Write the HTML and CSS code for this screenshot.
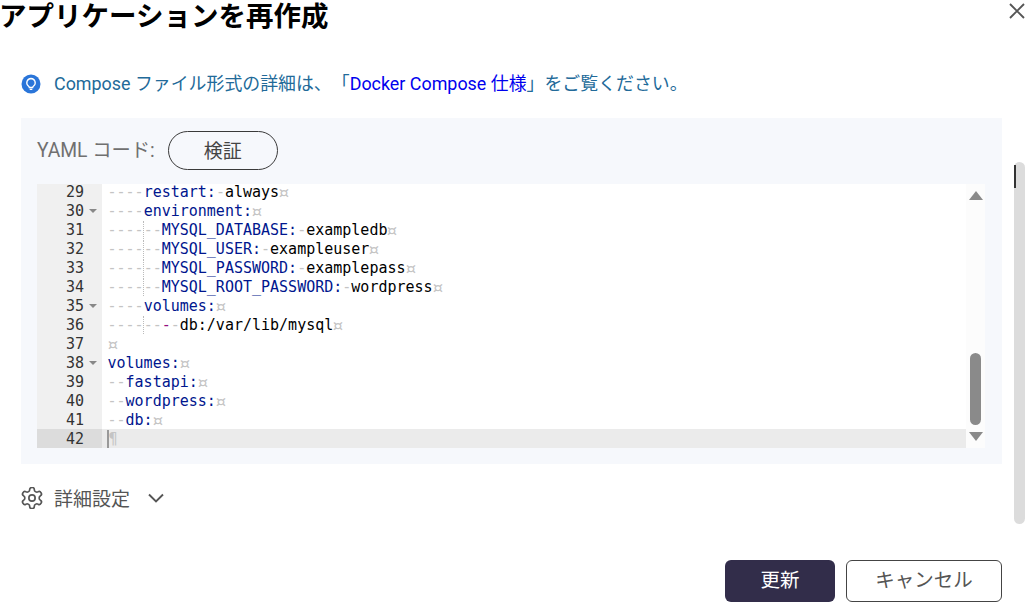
FILE: index.html
```
<!DOCTYPE html>
<html lang="ja">
<head>
<meta charset="utf-8">
<title>アプリケーションを再作成</title>
<link rel="stylesheet" href="styles.css">
</head>
<body>
<div class="dialog">
  <header class="head">
    <h1 class="title">アプリケーションを再作成</h1>
    <svg class="close" width="16" height="16" viewBox="0 0 16 16"><path d="M1 1L15 15M15 1L1 15" stroke="#555" stroke-width="1.9" fill="none"/></svg>
  </header>
  <div class="body">
    <main class="content">
      <p class="info">
        <svg class="bulb" width="20" height="20" viewBox="0 0 20 20"><circle cx="10" cy="10" r="9.5" fill="#2a75d9"/><path d="M10 4.500a4.300 4.300 0 0 0-2.400 7.800c.5.4.7.7.7 1.200h3.400c0-.5.2-.8.700-1.200A4.300 4.300 0 0 0 10 4.500zM8.700 15.300h2.600" fill="none" stroke="#fff" stroke-width="1.300"/></svg>
        <span class="info-text">Compose ファイル形式の詳細は、「<a class="link" href="#">Docker Compose 仕様</a>」をご覧ください。</span>
      </p>
      <section class="panel">
        <div class="yaml-row">
          <span class="yaml-label">YAML コード:</span>
          <button class="verify" type="button">検証</button>
        </div>
        <div class="editor">
          <div class="lines">
            <div class="line"><div class="gut"><span>29</span><i class="fold"></i></div><div class="code"><b>----</b><u>restart:</u><b>-</b>always<s>¤</s></div></div>
            <div class="line"><div class="gut"><span>30</span><i class="fold on"></i></div><div class="code"><b>----</b><u>environment:</u><s>¤</s></div></div>
            <div class="line"><div class="gut"><span>31</span><i class="fold"></i></div><div class="code"><b>----</b><b class="guide">--</b><u>MYSQL_DATABASE:</u><b>-</b>exampledb<s>¤</s></div></div>
            <div class="line"><div class="gut"><span>32</span><i class="fold"></i></div><div class="code"><b>----</b><b class="guide">--</b><u>MYSQL_USER:</u><b>-</b>exampleuser<s>¤</s></div></div>
            <div class="line"><div class="gut"><span>33</span><i class="fold"></i></div><div class="code"><b>----</b><b class="guide">--</b><u>MYSQL_PASSWORD:</u><b>-</b>examplepass<s>¤</s></div></div>
            <div class="line"><div class="gut"><span>34</span><i class="fold"></i></div><div class="code"><b>----</b><b class="guide">--</b><u>MYSQL_ROOT_PASSWORD:</u><b>-</b>wordpress<s>¤</s></div></div>
            <div class="line"><div class="gut"><span>35</span><i class="fold on"></i></div><div class="code"><b>----</b><u>volumes:</u><s>¤</s></div></div>
            <div class="line"><div class="gut"><span>36</span><i class="fold"></i></div><div class="code"><b>----</b><b class="guide">--</b><em>-</em><b>-</b>db:/var/lib/mysql<s>¤</s></div></div>
            <div class="line"><div class="gut"><span>37</span><i class="fold"></i></div><div class="code"><s>¤</s></div></div>
            <div class="line"><div class="gut"><span>38</span><i class="fold on"></i></div><div class="code"><u>volumes:</u><s>¤</s></div></div>
            <div class="line"><div class="gut"><span>39</span><i class="fold"></i></div><div class="code"><b>--</b><u>fastapi:</u><s>¤</s></div></div>
            <div class="line"><div class="gut"><span>40</span><i class="fold"></i></div><div class="code"><b>--</b><u>wordpress:</u><s>¤</s></div></div>
            <div class="line"><div class="gut"><span>41</span><i class="fold"></i></div><div class="code"><b>--</b><u>db:</u><s>¤</s></div></div>
            <div class="line active"><div class="gut"><span>42</span><i class="fold"></i></div><div class="code"><b class="cursor">¶</b></div></div>
          </div>
          <div class="vbar">
            <svg class="arrow" width="14" height="9" viewBox="0 0 14 9"><path d="M7 0L14 9H0z" fill="#8a8a8a"/></svg>
            <div class="thumb"></div>
            <svg class="arrow" width="14" height="9" viewBox="0 0 14 9"><path d="M0 0H14L7 9z" fill="#8a8a8a"/></svg>
          </div>
        </div>
      </section>
      <div class="advanced">
        <svg width="22" height="22" viewBox="1.500 1.500 21 21" fill="none" stroke="#555" stroke-width="1.600" stroke-linejoin="round"><circle cx="12" cy="12" r="3"/><path d="M12.220 2h-.44a2 2 0 0 0-2 2v.18a2 2 0 0 1-1 1.730l-.43.25a2 2 0 0 1-2 0l-.15-.08a2 2 0 0 0-2.730.73l-.22.38a2 2 0 0 0 .73 2.730l.15.1a2 2 0 0 1 1 1.720v.51a2 2 0 0 1-1 1.740l-.15.09a2 2 0 0 0-.73 2.730l.22.38a2 2 0 0 0 2.730.73l.15-.08a2 2 0 0 1 2 0l.43.25a2 2 0 0 1 1 1.730V20a2 2 0 0 0 2 2h.44a2 2 0 0 0 2-2v-.18a2 2 0 0 1 1-1.730l.43-.25a2 2 0 0 1 2 0l.15.08a2 2 0 0 0 2.730-.73l.22-.39a2 2 0 0 0-.73-2.730l-.15-.08a2 2 0 0 1-1-1.740v-.5a2 2 0 0 1 1-1.740l.15-.09a2 2 0 0 0 .73-2.730l-.22-.38a2 2 0 0 0-2.730-.73l-.15.08a2 2 0 0 1-2 0l-.43-.25a2 2 0 0 1-1-1.730V4a2 2 0 0 0-2-2z"/></svg>
        <span class="adv-label">詳細設定</span>
        <svg class="chev" width="18" height="10" viewBox="0 0 18 10"><path d="M2 1.500L9 8.500L16 1.500" fill="none" stroke="#555" stroke-width="1.900"/></svg>
      </div>
      <footer class="actions">
        <button class="btn primary" type="button">更新</button>
        <button class="btn ghost" type="button">キャンセル</button>
      </footer>
    </main>
    <div class="rail"><div class="rail-mark"></div></div>
  </div>
</div>
</body>
</html>
```
FILE: styles.css
```
* { box-sizing: border-box; }
html, body { margin: 0; padding: 0; }
body {
  width: 1029px;
  height: 608px;
  overflow: hidden;
  background: #fff;
  font-family: Roboto, "Noto Sans CJK JP", sans-serif;
  text-spacing-trim: space-all;
}
.dialog { display: flex; flex-direction: column; height: 608px; }
.head {
  display: flex;
  justify-content: space-between;
  align-items: flex-start;
  height: 70px;
  padding-right: 4px;
}
.title {
  margin: 0 0 0 -1px;
  font-size: 27.500px;
  line-height: 34px;
  font-weight: 700;
  color: #000;
}
.close { margin-top: 3px; }
.body { display: flex; flex: 1; }
.content { width: 1002px; padding-left: 21px; }
.info {
  display: flex;
  align-items: center;
  gap: 13px;
  margin: 0;
  height: 28px;
  font-size: 17.900px;
  color: #226a99;
}
.info-text { margin-bottom: 4px; }
.link { color: #0000ee; text-decoration: none; }
.panel {
  margin-top: 20px;
  height: 346px;
  background: #f6f8fc;
  padding: 13px 17px 16px 16px;
}
.yaml-row { display: flex; align-items: center; gap: 13px; height: 39px; }
.yaml-label { font-size: 19.300px; color: #707070; margin-bottom: 4px; }
.verify {
  width: 110px;
  height: 39px;
  padding: 0 0 2px;
  border: 1px solid #3a3a3a;
  border-radius: 20px;
  background: #f6f8fc;
  color: #444;
  font: inherit;
  font-size: 19px;
}
.editor {
  display: flex;
  margin-top: 14px;
  height: 264px;
  background: #fff;
}
.lines { flex: 1; min-width: 0; }
.line {
  display: flex;
  height: 19px;
  font-family: "DejaVu Sans Mono", monospace;
  font-size: 15px;
  line-height: 21px;
  color: #000;
  white-space: pre;
}
.line:first-child { height: 17px; line-height: 17px; }
.line b, .line u, .line em, .line i, .line s { font-weight: 400; font-style: normal; text-decoration: none; }
.line b { color: #c4c4c4; }
.line s {
  display: inline-block;
  color: #c4c4c4;
  transform: scale(1.350);
}
.line u { color: rgb(0, 22, 142); }
.line em { color: rgb(147, 15, 128); }
.gut {
  display: flex;
  justify-content: flex-end;
  width: 65px;
  background: #f0f0f0;
  color: #333;
  flex: none;
}
.fold { display: block; width: 18px; height: 19px; }
.fold.on::after {
  content: "";
  display: block;
  margin: 8px 0 0 5px;
  width: 0;
  height: 0;
  border-left: 4px solid transparent;
  border-right: 4px solid transparent;
  border-top: 4px solid #888;
}
.code { flex: 1; padding-left: 5.500px; }
.line .guide { border-left: 1px dotted #bbb; margin-left: -1px; }
.active .gut { background: #dcdcdc; }
.active .code { background: #ebebeb; }
.line .cursor { border-left: 2px solid #999; margin-left: -1px; }
.vbar {
  flex: none;
  width: 19px;
  background: #fcfcfc;
  display: flex;
  flex-direction: column;
  align-items: center;
  justify-content: flex-end;
  padding: 7px 0 7px;
}
.vbar .arrow:first-child { margin-bottom: auto; }
.thumb {
  width: 11px;
  height: 72px;
  background: #8a8a8a;
  border-radius: 6px;
  margin-bottom: 7px;
}
.advanced {
  display: flex;
  align-items: center;
  height: 24px;
  margin-top: 22px;
  color: #555;
}
.adv-label { margin-left: 11px; font-size: 19px; margin-bottom: 2px; }
.chev { margin-left: 17px; }
.actions {
  display: flex;
  justify-content: flex-end;
  gap: 11px;
  margin-top: 50px;
}
.btn {
  height: 42px;
  padding: 0 0 5px;
  border-radius: 6px;
  font: inherit;
  font-size: 19.500px;
}
.primary { width: 110px; background: #322d4a; border: 0; color: #fff; }
.ghost { width: 156px; background: #fff; border: 1px solid #444; color: #555; }
.rail {
  width: 11px;
  height: 362px;
  margin-top: 92px;
  margin-left: 12px;
  background: #dcdcdc;
  border-radius: 6px;
  padding-top: 3px;
}
.rail-mark { width: 2px; height: 23px; background: #333; }
```
